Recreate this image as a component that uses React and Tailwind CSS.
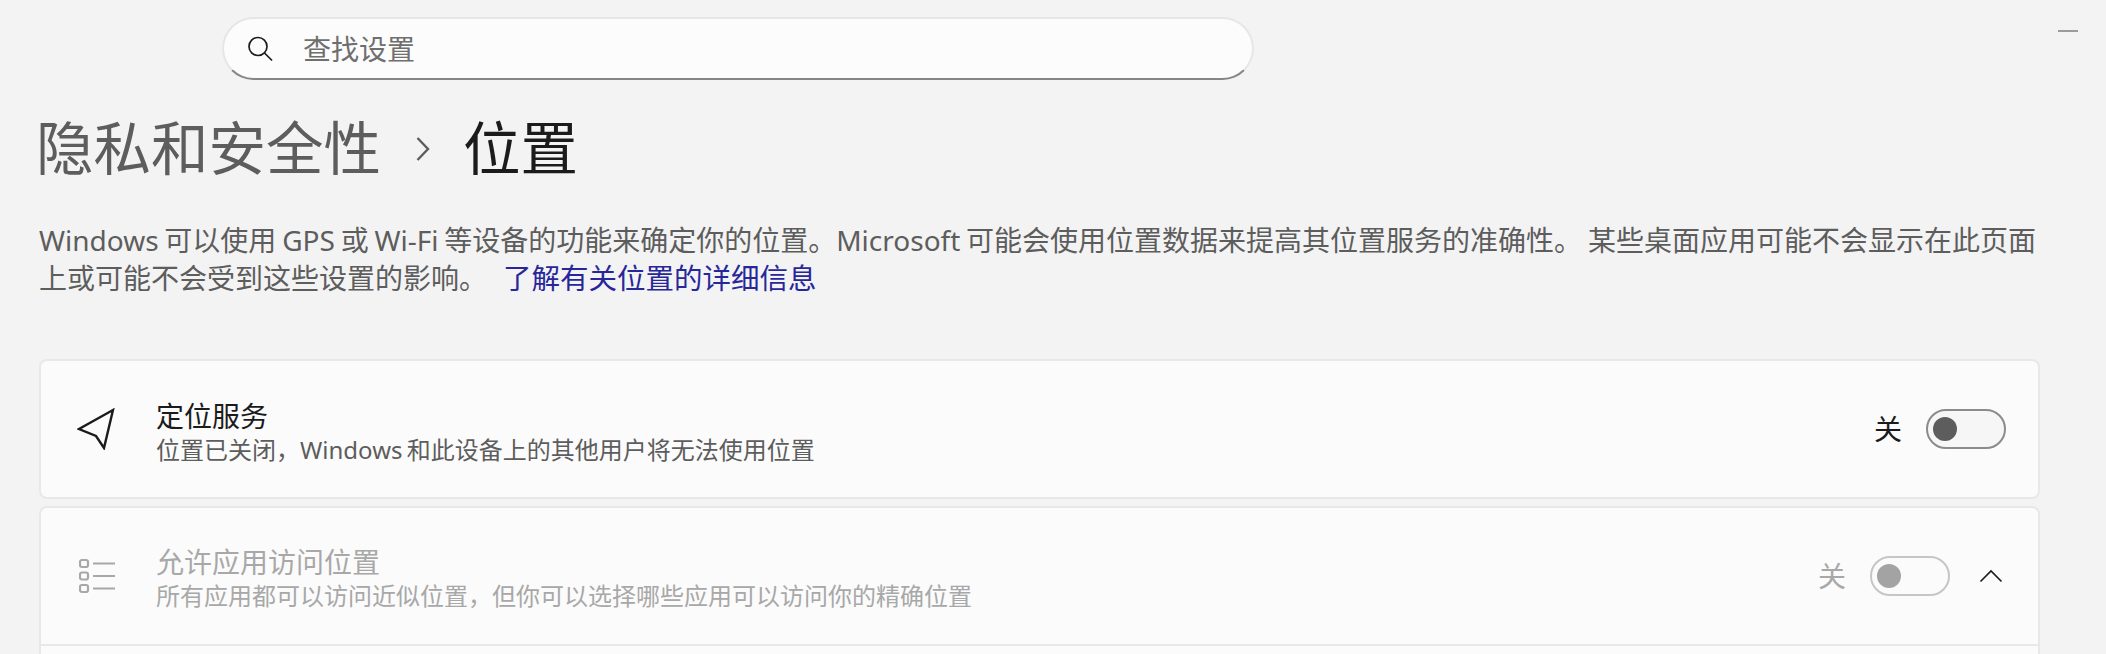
import React from 'react';

const FONT = 'font-["Noto_Sans","Noto_Sans_CJK_SC",sans-serif]';

const SearchIcon = () => (
  <svg width="28" height="28" viewBox="0 0 28 28" fill="none" stroke="#1b1b1b" strokeWidth="1.7" className="shrink-0">
    <circle cx="12" cy="11.5" r="9" />
    <path d="M18.5 18 L26 25.5" />
  </svg>
);

const LocationIcon = () => (
  <svg width="38" height="42" viewBox="0 0 38 42" fill="none" stroke="#1b1b1b" strokeWidth="2.4" strokeLinejoin="miter">
    <path d="M36 2 L2 21 L19 28 L27 40 Z" />
  </svg>
);

const ListIcon = () => (
  <svg width="36" height="36" viewBox="0 0 36 36" fill="none" stroke="#a8a8a8" strokeWidth="2.2">
    <rect x="1" y="2" width="8" height="7" rx="2" />
    <rect x="1" y="14.5" width="8" height="7" rx="2" />
    <rect x="1" y="27" width="8" height="7" rx="2" />
    <path d="M14 5.5 H36 M14 18 H36 M14 30.5 H36" />
  </svg>
);

const Chevron = () => (
  <svg width="24" height="14" viewBox="0 0 24 14" fill="none" stroke="#1b1b1b" strokeWidth="1.6">
    <path d="M1.5 12.5 L12 2 L22.5 12.5" />
  </svg>
);

const Toggle = ({ disabled }) => (
  <div className={`flex h-10 w-20 items-center rounded-full border-2 pl-[5px] ${disabled ? 'border-[#c6c6c6]' : 'border-[#8b8b8b] bg-[#f6f6f6]'}`}>
    <div className={`h-6 w-6 rounded-full ${disabled ? 'bg-[#a3a3a3]' : 'bg-[#5d5d5d]'}`} />
  </div>
);

export default function App() {
  return (
    <div className={`flex h-[654px] w-[2106px] flex-col overflow-hidden bg-[#f3f3f3] ${FONT}`}>
      <div className="flex h-[117px] shrink-0 items-start justify-between pt-[17px] pl-[222px] pr-[28px]">
        <div className="flex h-[63px] w-[1032px] items-center rounded-full border-2 border-[#e6e6e6] border-b-[#868686] bg-[#fcfcfc] pl-[22px]">
          <SearchIcon />
          <span className="ml-[29px] text-[28px] leading-none text-[#6f6f6f]">查找设置</span>
        </div>
        <div className="mt-[13px] h-0.5 w-5 bg-[#9b9b9b]" />
      </div>

      <div className="flex h-[64px] shrink-0 items-center pl-9 text-[57.5px] leading-none">
        <span className="text-[#5d5d5d]">隐私和安全性</span>
        <svg width="14" height="26" viewBox="0 0 14 26" fill="none" stroke="#5d5d5d" strokeWidth="2.4" className="ml-[35px] mr-[33px]">
          <path d="M1.5 2 L12 13 L1.5 24" />
        </svg>
        <span className="text-[#1b1b1b]">位置</span>
      </div>

      <p className="mt-[40px] w-[2045px] shrink-0 pl-[39px] text-[28px] leading-[38px] text-[#5d5d5d] [word-spacing:-1.5px]">
        Windows 可以使用 GPS 或 Wi-Fi 等设备的功能来确定你的位置。Microsoft 可能会使用位置数据来提高其位置服务的准确性。 某些桌面应用可能不会显示在此页面上或可能不会受到这些设置的影响。
        <span className="ml-[16px] text-[28.5px] text-[#27279b]">了解有关位置的详细信息</span>
      </p>

      <div className="mt-[62px] ml-[39px] flex h-[140px] w-[2001px] shrink-0 items-center rounded-lg border-2 border-[#e8e8e8] bg-[#fbfbfb] pr-[32px] pl-9">
        <LocationIcon />
        <div className="ml-[41px] flex-1 pt-[5px]">
          <div className="text-[28px] leading-[36px] text-[#1b1b1b]">定位服务</div>
          <div className="text-[24px] leading-[31px] text-[#5d5d5d] [word-spacing:-2px]">位置已关闭，Windows 和此设备上的其他用户将无法使用位置</div>
        </div>
        <span className="mr-[24px] text-[28px] text-[#1b1b1b]">关</span>
        <Toggle />
      </div>

      <div className="mt-[7px] ml-[39px] w-[2001px] shrink-0 rounded-t-lg border-2 border-[#e8e8e8] bg-[#fbfbfb]">
        <div className="flex h-[138px] items-center border-b-2 border-[#e8e8e8] pr-[35px] pl-[38px]">
          <ListIcon />
          <div className="ml-[41px] flex-1 pt-[2px]">
            <div className="text-[28px] leading-[36px] text-[#a8a8a8]">允许应用访问位置</div>
            <div className="text-[24px] leading-[31px] text-[#a8a8a8]">所有应用都可以访问近似位置，但你可以选择哪些应用可以访问你的精确位置</div>
          </div>
          <span className="mr-[24px] text-[28px] text-[#a8a8a8]">关</span>
          <Toggle disabled />
          <div className="ml-[29px]"><Chevron /></div>
        </div>
        <div className="h-10" />
      </div>
    </div>
  );
}
